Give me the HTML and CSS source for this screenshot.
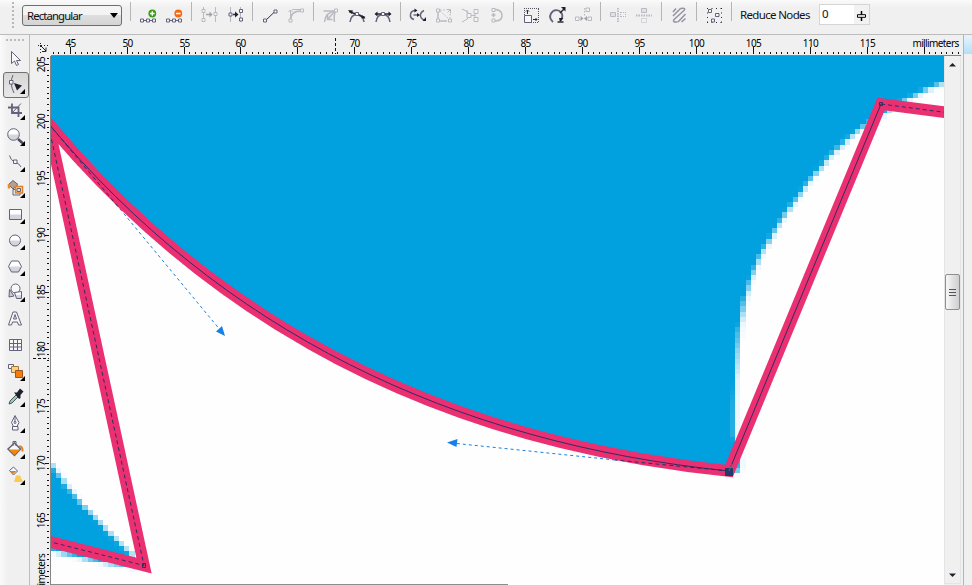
FILE: index.html
```
<!DOCTYPE html>
<html lang="en">
<head>
  <meta charset="UTF-8">
  <title>Drawing</title>
  <link rel="stylesheet" href="styles.css">
</head>
<body>
  <header class="toolbar">
    <div class="grip"></div>
    <div class="select"><span>Rectangular</span><i class="caret"></i></div>

    <div class="group">
      <svg class="icon" viewBox="0 0 26 26"><g class="ln"><path d="M6 18.500h14"/><path class="w" d="M5.500 17h3v3h-3zM11.500 17h3v3h-3zM17.500 17h3v3h-3z"/></g><circle cx="17.300" cy="11.500" r="3.900" fill="#3c9c1c"/><path d="M15 11.500h4.600M17.300 9.200v4.600" stroke="#fff" stroke-width="1.400"/></svg>
      <svg class="icon" viewBox="0 0 26 26"><g class="ln"><path d="M6 18.500h14"/><path class="w" d="M5.500 17h3v3h-3zM11.500 17h3v3h-3zM17.500 17h3v3h-3z"/></g><circle cx="17.300" cy="11.500" r="3.900" fill="#f26a16"/><path d="M15 11.500h4.600" stroke="#fff" stroke-width="1.500"/></svg>
    </div>
    <div class="group">
      <svg class="icon off" viewBox="0 0 26 26"><g class="ln"><path d="M7.500 5v15M19.500 5v15"/><path class="w" d="M6 7.500h3v3H6zM6 16.500h3v3H6zM18 10.500h3v3h-3z"/></g><path class="dk thick" d="M10 12.500h5"/><path class="blk" d="M13.500 9.500l3 3-3 3z"/></svg>
      <svg class="icon" viewBox="0 0 26 26"><g class="ln"><path class="faint" d="M8.500 5v15M18.500 5v15"/><path class="w" d="M7 11h3v3H7zM17.500 7.500h3v3h-3zM17.500 16h3v3h-3z"/></g><path class="dk thick" d="M11 12.500h4"/><path class="blk" d="M13 9.500l3.500 3-3.500 3z"/></svg>
    </div>
    <div class="group">
      <svg class="icon" viewBox="0 0 26 26"><path class="dk" d="M8.500 18.500L18.500 9"/><g class="ln"><path class="w" d="M6.500 17h3v3h-3zM17 8h3v3h-3z"/></g></svg>
      <svg class="icon off" viewBox="0 0 26 26"><g class="ln"><path class="thick" d="M7.500 18q0-9 11-9"/><path d="M7.500 17V8M5.500 10l2-2 2 2M9 7.500h8"/><path class="w" d="M6 17h3v3H6zM17.500 7h3v3h-3z"/></g></svg>
    </div>
    <div class="group">
      <svg class="icon off" viewBox="0 0 26 26"><g class="ln"><path class="thick" d="M6.500 20q1-10 11-11q-2 4-1 11"/><path class="thick" d="M5.500 9h12M10 17l7-8M9.500 12.500v5h5"/><path class="w" d="M16.500 7h3v3h-3z"/></g></svg>
      <svg class="icon" viewBox="0 0 26 26"><g class="ln"><path class="thick" d="M6 20q1-7.500 7-7.500t7 7.500"/></g><path class="dk thick" d="M5 9.500l16 6"/><path class="blk" d="M4 8l5 .5-1.500 3.500zM21.500 16.500l-4.500-.3 1.500-3z"/><path class="ln w" d="M11.500 10.500h3v3h-3z"/></svg>
      <svg class="icon" viewBox="0 0 26 26"><g class="ln"><path class="thick" d="M6 20q1-7.500 7-7.500t7 7.500"/></g><path class="dk thick" d="M6 12h14"/><path class="blk" d="M4.500 12l3-2.500v5zM21.500 12l-3-2.500v5z"/><path class="ln w" d="M11.500 10.500h3v3h-3z"/></svg>
    </div>
    <div class="group">
      <svg class="icon" viewBox="0 0 26 26"><g class="ln"><path class="thick" d="M10.500 8.500q-4.500 0-5 4t3.500 5M19 8.500q-4 2-3.500 5.500t5 4"/></g><path class="dk" d="M8.500 13h5"/><path class="blk" d="M12 11l3 2-3 2zM9.500 6.500l3 2-3 2zM21 15v4h-3.500z"/></svg>
      <svg class="icon off" viewBox="0 0 26 26"><g class="ln"><path class="thick" d="M7 10v8M9 19h7"/><path stroke-dasharray="1.500 1.500" d="M9 9l9 8M9 8h5M19 12v5"/><path class="w" d="M5.500 7h3v3h-3zM5.500 17h3v3h-3zM17.500 17h3v3h-3z"/><path d="M15.500 7.500h4v4M19.500 7.500l-3 3"/></g></svg>
      <svg class="icon off" viewBox="0 0 26 26"><g class="ln"><path d="M5 7q5 1 8 6q-2 5-8 7M10 8v3M18 9v9M12 13.500h6"/><path class="w" d="M10 11.500h4v4h-4zM17 7.500h4v4h-4zM17 15.500h4v4h-4z"/></g></svg>
      <svg class="icon off" viewBox="0 0 26 26"><g class="ln"><path class="thick" d="M11 7.500h2q6 1 6 6t-6 5.500h-2"/><path class="w" d="M9 6.500h3v3H9zM9 17h3v3H9z"/><path class="thick" d="M10.500 11v4M8.500 13h4"/></g></svg>
    </div>
    <div class="group">
      <svg class="icon" viewBox="0 0 26 26"><path class="dk dots" stroke-dasharray="1 1" d="M6.500 6v8M6 6.500h15M20.500 7v14M13 20.500h8"/><path class="ln w" d="M6.500 13.500h7v7h-7z"/><path class="dk" d="M9.500 8v4M8 9.500L9.500 8 11 9.500M15 17.500h4M17.500 16l1.500 1.500-1.500 1.500"/></svg>
      <svg class="icon" viewBox="0 0 26 26"><path class="ln heavy" d="M9 20q-4.500-4-2-8.500t7.500-3q5 2.500 3.500 7.500l-1.500 3"/><path class="dk thick" d="M13.500 20h6M16 11l4-4"/><path class="blk" d="M17 5h4.500v4.500zM15 16h4.500l-3.500 4z"/></svg>
      <svg class="icon off" viewBox="0 0 26 26"><g class="ln"><path stroke-dasharray="1.500 1.500" d="M14.500 6v9"/><path class="w" d="M16 6h3.500v3.500H16zM5.500 15H9v3.500H5.500zM18 15h3.500v3.500H18z"/></g><path class="blk" d="M10.500 14l3 2.500-3 2.500zM17 14l-3 2.500 3 2.500z"/></svg>
    </div>
    <div class="group">
      <svg class="icon off" viewBox="0 0 26 26"><g class="ln"><path class="gray" d="M5.500 10.500h5v4h-5z"/><path stroke-dasharray="1 1" d="M16 10.500h5M16 14.500h5M20.500 10v5M15.500 10v5"/><path class="heavy" stroke-dasharray="1.500 1" d="M13 6v15"/></g></svg>
      <svg class="icon off" viewBox="0 0 26 26"><g class="ln"><path class="gray" d="M10.500 6.500h5v4h-5z"/><path stroke-dasharray="1 1" d="M10.500 16.500h5v4h-5z"/><path class="heavy" stroke-dasharray="1.500 1" d="M5 13.500h16"/></g></svg>
    </div>
    <div class="group">
      <svg class="icon mid" viewBox="0 0 26 26"><g class="ln"><path class="thick" d="M7 10l3-3.500M7 14L14.500 6.500M8 17.500L18.500 8M12 20l7.500-8M15.500 20l4-3.500M8 17.500q-2 3 3.500 2.500M14.500 6.500q5-1 4 1.500"/></g></svg>
    </div>
    <div class="group">
      <svg class="icon" viewBox="0 0 26 26"><path class="dk" stroke-dasharray="1 3.500" d="M6 6.500h15M6 20.500h15M6.500 6v15M20.500 6v15"/><path class="ln w" d="M7.500 7.500h3v3h-3zM14.500 11.500h3.500v3h-3.500zM10.500 17h3v3h-3z"/></svg>
    </div>
    <div class="group reduce">
      <label>Reduce Nodes</label>
      <div class="spin"><span>0</span>
        <svg width="11" height="12" viewBox="0 0 11 12"><path d="M5.500 1v10" stroke="#000" stroke-width="1.500"/><path d="M1.500 4.700h8v2.600h-8z" fill="#fff" stroke="#000"/></svg>
      </div>
    </div>
  </header>

  <div class="workspace">
    <aside class="toolbox">
      <div class="grip-h"></div>
      <div class="tool nofly"><svg viewBox="0 0 26 26"><path class="ln w" d="M10.500 6.500v12l3-2.500 2 4.500 2-1-2-4h4z"/></svg></div>
      <div class="tool active"><svg viewBox="0 0 26 26"><path class="ln" d="M12 4q-4 8 1 18"/><path class="ln w" d="M8.500 9.500h3.500v3.500H8.500z"/><path class="blk" d="M13 12l8 2.500-5 5z"/></svg></div>
      <div class="tool"><svg viewBox="0 0 26 26"><path class="ln heavy" d="M7 10.500h10.500V20M11 6.500V16H21"/><path class="ln" d="M11 16L20 6.500"/></svg></div>
      <div class="tool"><svg viewBox="0 0 26 26"><circle class="ln glass" cx="12.500" cy="11.500" r="5.800"/><path d="M17 16l5 4.500" stroke="#4a4a5e" stroke-width="2.500"/></svg></div>
      <div class="tool"><svg viewBox="0 0 26 26"><path class="ln" d="M8.500 6.500q1 5 5.500 6.500t6 5"/><path class="ln w" d="M12.500 11h3.500v3.500h-3.500z"/></svg></div>
      <div class="tool"><svg viewBox="0 0 26 26"><path d="M7.500 9.500l4.500-4 5 4-5 4.500z" fill="#b5a08c" stroke="#62627a"/><path d="M8 9v4.500" stroke="#e0912f" stroke-width="2.500"/><path class="ln w" d="M12 14.500h7v5.500h-7z"/><path d="M14.500 11.500h7v6.500h-7z" fill="#f3e0c8" stroke="#e08022" stroke-width="1.500"/><path class="ln" d="M16 13.500h3.500v3H16z"/></svg></div>
      <div class="tool"><svg viewBox="0 0 26 26"><path class="ln glass" d="M8.500 8.500h12v10h-12z"/></svg></div>
      <div class="tool"><svg viewBox="0 0 26 26"><circle class="ln glass" cx="14" cy="13.500" r="5.500"/></svg></div>
      <div class="tool"><svg viewBox="0 0 26 26"><path class="ln glass" d="M7.500 13.500l3-5.500h7l3 5.500-3 5.500h-7z"/></svg></div>
      <div class="tool"><svg viewBox="0 0 26 26"><path class="ln gray" d="M8.500 10.500l4.500 6.500-5 1z"/><circle class="ln w" cx="14.500" cy="9.500" r="4.500"/><path class="ln glass" d="M13.500 13.500l7-1v7h-5z"/></svg></div>
      <div class="tool nofly"><svg viewBox="0 0 26 26"><path class="ln w" d="M7.500 20L12 7h3.500L20.500 20h-3l-1-3h-5l-1 3zM12.500 14h3L14 9.500z" fill-rule="evenodd"/></svg></div>
      <div class="tool nofly"><svg viewBox="0 0 26 26"><path class="ln w" d="M8.500 7.500h12v11h-12zM8.500 11.500h12M8.500 15h12M12.500 7.500v11M16.500 7.500v11"/></svg></div>
      <div class="tool"><svg viewBox="0 0 26 26"><path class="ln w" d="M7.500 6.500h5v4h-5z"/><path d="M10.500 8.500h7v6h-7z" fill="#ffd27c" stroke="#a07840"/><path d="M14.500 12.500h7v7h-7z" fill="#f57b0c" stroke="#9c5522"/></svg></div>
      <div class="tool"><svg viewBox="0 0 26 26"><path d="M8 20l1-3 6-6 2 2-6 6z" fill="#9dc9bb" stroke="#46585b"/><path class="blk" d="M13 8.500l3 0 3-4 3.500 3-3 3.500v3l-1.500 1z"/></svg></div>
      <div class="tool"><svg viewBox="0 0 26 26"><path class="ln w" d="M14 5.500l-3.500 7 2 4h3.500l2-4zM14 6v6M11.500 16.500h5.500v3.500h-5.500z"/><circle class="ln" cx="14" cy="12.500" r="1"/></svg></div>
      <div class="tool"><svg viewBox="0 0 26 26"><path class="ln w thick" d="M7 13L13.500 7l6 6-6 6.500z"/><path d="M8 13.500h11L13.500 19z" fill="#f0870f"/><path d="M18 10.500q4-.5 3.500 5" fill="none" stroke="#e08022" stroke-width="2"/><path class="ln" d="M12 10V5.500h3V10"/></svg></div>
      <div class="tool"><svg viewBox="0 0 26 26"><path class="ln w" d="M8.500 8.500l4-3.500 4 4-4 4z"/><path d="M9.500 9h6l-3.500 3z" fill="#e08022"/><path d="M15 13.500h4l3 6.500h-9z" fill="#fbca51"/></svg></div>
    </aside>

    <main class="view">
      <div class="origin">
        <svg width="20" height="20" viewBox="30 35 20 20"><path d="M38 45.500h10M40.500 43v10" stroke="#222" stroke-dasharray="1 2"/><path d="M40 45l6 6M42 51.500h4v-4" stroke="#222" fill="none"/></svg>
      </div>
      <svg class="ruler-h" id="rulerH" viewBox="51 35 910 20"></svg>
      <svg class="ruler-v" id="rulerV" viewBox="30 56 20 529"></svg>
      <div class="page">
        <canvas id="bitmap" width="171" height="102"></canvas>
        <svg class="vectors" viewBox="51 56 893 529">
          <path class="outline" d="M20 534.200L144 565.500L48 123C221 331 452 443 729 471L881 104L960 114.300"/>
          <g class="wire">
            <path class="dash" d="M20 534.200L144 565.500L48 123"/>
            <path d="M48 123C221 331 452 443 729 471L881 104"/>
            <path class="dash" d="M881 104L960 114.300"/>
            <path class="dash" d="M48 123L120 209M729 471L615 460"/>
          </g>
          <path class="handle" d="M120 209L221 331M615 460L452 443"/>
          <path class="tip" d="M225 336l-3-10-6 5.500zM447 442.500l10.500-3.500-1 8z"/>
          <path class="node" d="M142.500 563.500h3v4h-3zM879.500 102.500h3v3h-3z"/>
          <path d="M725 468h8v8h-8z" fill="#213c66"/>
          <path d="M729 471l3-7" stroke="#5a6c90"/>
        </svg>
      </div>
      <div class="scroll">
        <svg width="9" height="5" viewBox="0 0 9 5"><path class="blk" d="M1 4.500L4.500 1 8 4.500z"/></svg>
        <div class="thumb"><i></i><i></i><i></i></div>
        <svg width="9" height="5" viewBox="0 0 9 5"><path class="blk" d="M1 .5L4.500 4 8 .5z"/></svg>
      </div>
    </main>
    <div class="dock"><div class="dock-tab"></div></div>
  </div>

  <svg width="0" height="0" class="defs"><linearGradient id="glass" x1="0" y1="0" x2="0" y2="1"><stop offset=".4" stop-color="#fff"/><stop offset=".6" stop-color="#d2d5dc"/></linearGradient></svg>

  <script src="script.js"></script>
</body>
</html>
```

FILE: styles.css
```
* {
  box-sizing: border-box;
}
body {
  margin: 0;
  width: 972px;
  height: 585px;
  overflow: hidden;
  background: #f0f0f0;
  font-family: "Noto Sans", "Open Sans", sans-serif;
  font-size: 11.5px;
  color: #111;
}
svg {
  display: block;
}
.defs {
  position: absolute;
}

/* top bar */
.toolbar {
  display: flex;
  height: 35px;
  border-bottom: 1px solid #bcbcbc;
  background: linear-gradient(#fafafa, #f0f0f0 8px);
}
.grip {
  width: 2px;
  height: 26px;
  margin: 2px 8px 0 12px;
  background: repeating-linear-gradient(#b8b8b8 0 2px, transparent 2px 4px);
}
.select {
  display: flex;
  align-items: center;
  justify-content: space-between;
  width: 100px;
  height: 21px;
  margin: 5px 8px 0 0;
  padding: 0 3px 0 4px;
  border: 1px solid #6e6e6e;
  border-radius: 3px;
  background: linear-gradient(#f4f4f4 50%, #dedede 50%, #d4d4d4);
  font-size: 11.3px;
  letter-spacing: -0.85px;
}
.caret {
  border: 4px solid transparent;
  border-top: 5px solid #000;
  border-bottom: 0;
}
.group {
  display: flex;
  padding: 2px 4px 0;
  background: linear-gradient(#b5b5b5, #b5b5b5) 0 2px / 1px 19px no-repeat;
  border-left: 1px solid transparent;
  background-origin: border-box;
}
.icon {
  width: 26px;
  height: 26px;
}
.off {
  opacity: 0.38;
}
.mid {
  opacity: 0.65;
}
.ln {
  fill: none;
  stroke: #62627a;
  stroke-width: 1;
}
.w {
  fill: #f8f8fa;
}
.glass {
  fill: url(#glass);
}
.gray {
  fill: #ccc;
}
.faint {
  stroke: #b4b4bc;
}
.thick {
  stroke-width: 1.5;
}
.heavy {
  stroke-width: 1.8;
}
.dk {
  fill: none;
  stroke: #2a2a3c;
}
.dots {
  stroke: #55555f;
}
.blk {
  fill: #20202c;
}
.reduce {
  padding: 0 0 0 8px;
}
.reduce label {
  width: 79px;
  padding-top: 7px;
  letter-spacing: -0.65px;
  white-space: nowrap;
}
.spin {
  display: flex;
  justify-content: space-between;
  width: 51px;
  height: 21px;
  margin-top: 4px;
  padding: 1px 2px 0;
  border: 1px solid #d5d5d5;
  background: linear-gradient(90deg, #fff 34px, #f2f2f2 34px);
}
.spin svg {
  margin-top: 4px;
}

/* left tools */
.workspace {
  display: flex;
  height: 550px;
}
.toolbox {
  width: 30px;
  border-right: 1px solid #bcbcbc;
  background: linear-gradient(90deg, #fafafa, #f0f0f0 8px);
}
.grip-h {
  width: 19px;
  height: 2px;
  margin: 4px 0 4px 6px;
  background: repeating-linear-gradient(90deg, #bbb 0 2px, transparent 2px 4px);
}
.tool {
  position: relative;
  height: 26.05px;
  padding-left: 1px;
}
.tool svg {
  position: relative;
  width: 26px;
  height: 26px;
}
.tool::after {
  content: "";
  position: absolute;
  right: 4px;
  bottom: 3px;
  border-left: 5px solid transparent;
  border-bottom: 5px solid #000;
}
.tool.nofly::after {
  display: none;
}
.active::before {
  content: "";
  position: absolute;
  left: 3px;
  top: 1px;
  width: 24px;
  height: 24px;
  border: 1px solid #707070;
  border-radius: 3px;
  background: linear-gradient(#d6d6d6, #e8e8e8);
}

/* rulers and drawing */
.view {
  display: grid;
  grid-template: 21px 529px / 21px 893px 17px;
}
.origin {
  height: 21px;
}
.ruler-h {
  grid-column: 2 / 4;
  width: 910px;
  height: 21px;
  border-bottom: 1px solid #858585;
}
.ruler-h, .ruler-v {
  font-size: 10px;
  letter-spacing: -0.6px;
}
.ruler-v {
  width: 21px;
  height: 529px;
  border-right: 1px solid #858585;
}
.tick {
  stroke: #111;
  shape-rendering: crispEdges;
}
.page {
  position: relative;
  overflow: hidden;
  background: #fefefe;
}
.page::after {
  content: "";
  position: absolute;
  left: 0;
  bottom: 0;
  width: 457px;
  height: 1px;
  background: #8c8c8c;
}
#bitmap {
  display: block;
  width: 892.6px;
  height: 532.4px;
  image-rendering: pixelated;
}
.vectors {
  position: absolute;
  left: 0;
  top: 0;
  width: 893px;
  height: 529px;
}
.outline {
  fill: none;
  stroke: #eb3072;
  stroke-width: 11.6;
  stroke-miterlimit: 10;
}
.wire {
  fill: none;
  stroke: #2f2c60;
  stroke-width: 1;
}
.dash {
  stroke-dasharray: 4 3;
}
.handle {
  fill: none;
  stroke: #1580e0;
  stroke-dasharray: 3 3;
}
.tip {
  fill: #1580e8;
}
.node {
  fill: none;
  stroke: #2f2c60;
}
.scroll {
  display: flex;
  flex-direction: column;
  align-items: center;
  justify-content: space-between;
  width: 17px;
  height: 528px;
  padding: 6px 0 5px;
  border: 1px solid #e4e4e4;
  border-top: 0;
}
.thumb {
  display: flex;
  flex-direction: column;
  align-items: center;
  justify-content: center;
  gap: 1px;
  width: 15px;
  height: 36px;
  margin-bottom: 57px;
  border: 1px solid #8e8e8e;
  border-radius: 2px;
  background: linear-gradient(90deg, #f7f7f7, #cfcfd2);
}
.thumb i {
  width: 7px;
  height: 2px;
  border-bottom: 1px solid #555;
}
.dock {
  flex: 1;
  margin-left: 2px;
  border-left: 1px solid #b5b5b5;
}
.dock-tab {
  height: 18px;
  margin-top: 1px;
  background: linear-gradient(#e4f4fd, #b4dff7);
}
```

FILE: script.js
```
const NS = 'http://www.w3.org/2000/svg';
const MM = 11.386;

function tick(parent, x1, y1, x2, y2) {
  const l = document.createElementNS(NS, 'line');
  l.setAttribute('class', 'tick');
  l.setAttribute('x1', x1);
  l.setAttribute('y1', y1);
  l.setAttribute('x2', x2);
  l.setAttribute('y2', y2);
  parent.appendChild(l);
  return l;
}

function label(parent, text, x, y, rotate) {
  const t = document.createElementNS(NS, 'text');
  t.textContent = text;
  t.setAttribute('text-anchor', 'middle');
  t.setAttribute('transform', `translate(${x} ${y})` + (rotate ? ' rotate(-90)' : ''));
  parent.appendChild(t);
}

const rulerH = document.getElementById('rulerH');
for (let i = 87; i <= 246; i++) {
  const x = Math.floor(70.2 + (i / 2 - 45) * MM) + 0.5;
  if (x > 960) break;
  const major = i % 10 === 0;
  tick(rulerH, x, major ? 47 : 52, x, 54);
  if (major && i < 240) label(rulerH, i / 2, x, 47);
}
label(rulerH, 'millimeters', 935.5, 47);
tick(rulerH, 335.5, 38, 335.5, 54).setAttribute('stroke-dasharray', '3 2');

const rulerV = document.getElementById('rulerV');
for (let i = 411; i > 318; i--) {
  const y = Math.floor(121.5 + (200 - i / 2) * MM) + 0.5;
  const major = i % 10 === 0;
  tick(rulerV, major ? 45 : 47, y, 49, y);
  if (major && i > 320) label(rulerV, i / 2, 45, y, true);
}
label(rulerV, 'millimeters', 45, 577, true);
tick(rulerV, 33, 358.5, 49, 358.5).setAttribute('stroke-dasharray', '3 2');

// low resolution bitmap under the traced outline
const ctx = document.getElementById('bitmap').getContext('2d');
const cell = 5.22;
ctx.scale(1 / cell, 1 / cell);
ctx.translate(-51, -56);

const sky = new Path2D('M40 40H960V76L944 82C900 98 861 126 838 148S768 235 754 269S734 345 734 437L739 458L739 471L729 472C452 444 221 332 48 126Z');
const corner = new Path2D('M40 448L51 464C70 495 100 525 134 558L137 567L103 562L51 550L40 548Z');
for (const p of [sky, corner]) {
  ctx.fillStyle = '#00a1de';
  ctx.fill(p);
  ctx.strokeStyle = 'rgba(0, 161, 222, 0.2)';
  ctx.lineWidth = 5;
  ctx.stroke(p);
}
```
